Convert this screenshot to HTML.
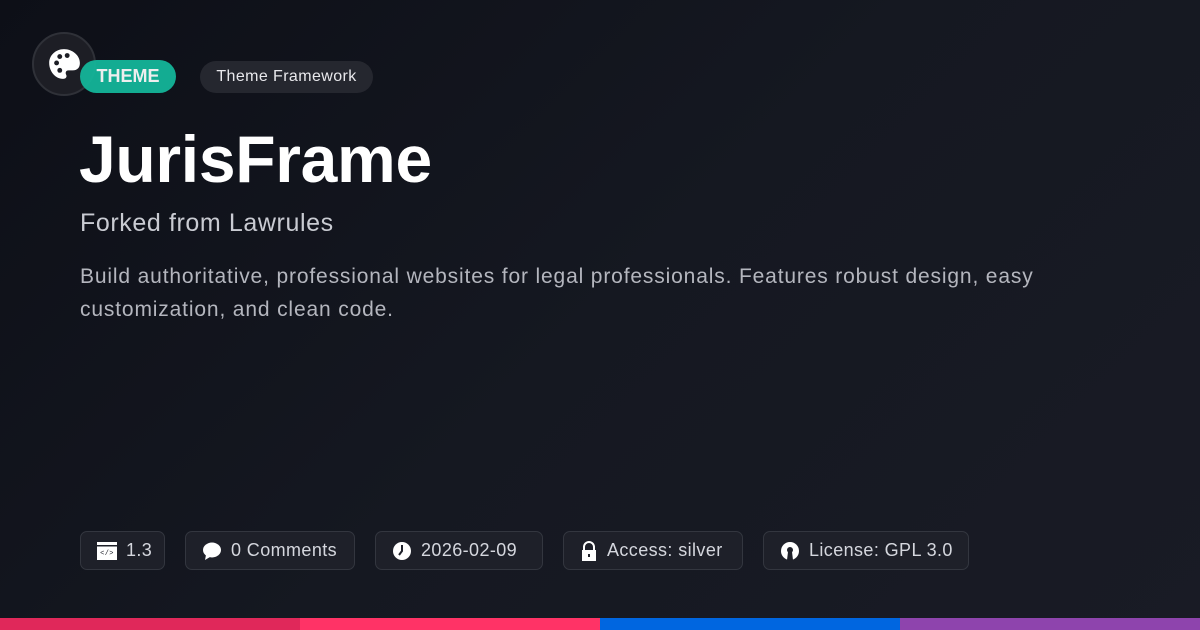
<!DOCTYPE html>
<html><head><meta charset="utf-8"><style>
*{margin:0;padding:0;box-sizing:border-box}
body{width:1200px;height:630px;overflow:hidden;background:linear-gradient(135deg,#0d0f17 0%,#151821 50%,#191b25 100%);font-family:"Liberation Sans",sans-serif;position:relative;color:#fff}
.logo{position:absolute;left:32px;top:32px;width:64px;height:64px;border-radius:50%;background:#1d1e25;border:2px solid #2f3138;display:flex;align-items:center;justify-content:center}
.theme{position:absolute;left:80px;top:60px;width:96px;height:33px;border-radius:17px;background:#14b89c;font-weight:bold;font-size:18px;line-height:33px;text-align:center;opacity:.93}
.fw{position:absolute;left:200px;top:61px;width:173px;height:32px;border-radius:16px;background:#25272f;font-size:16px;letter-spacing:.4px;line-height:32px;text-align:center;color:#e8e8ec}
h1{position:absolute;left:79px;top:121px;font-size:66px;font-weight:bold;letter-spacing:-0.3px;line-height:76px}
.sub{position:absolute;left:80px;top:209px;font-size:25px;letter-spacing:.6px;color:#c9cbd2}
.desc{position:absolute;left:80px;top:260px;width:1000px;font-size:21px;letter-spacing:.85px;line-height:33px;color:#b4b6be}
.chip{position:absolute;top:531px;height:39px;border-radius:7px;background:#1e2029;border:1px solid #33363f;font-size:18px;letter-spacing:.4px;line-height:37px;color:#d5d7de;display:flex;align-items:center;gap:9px;padding-left:16px}
.bar{position:absolute;top:618px;height:12px;width:300px}
</style></head><body>
<div class="logo"><svg width="36" height="36" viewBox="0 0 34 34"><path d="M17 3C9 3 3 9 3 16c0 8 6 15 13 15 3 0 4-2 3-4-1-2 0-4 2-4h4c5 0 7-3 7-7C32 9 25 3 17 3z" fill="#fff"/><circle cx="10" cy="16" r="2.3" fill="#1d1e25"/><circle cx="13" cy="10" r="2.3" fill="#1d1e25"/><circle cx="20" cy="9" r="2.3" fill="#1d1e25"/><circle cx="13" cy="23" r="2.3" fill="#1d1e25"/></svg></div>
<div class="theme">THEME</div>
<div class="fw">Theme Framework</div>
<h1>JurisFrame</h1>
<div class="sub">Forked from Lawrules</div>
<div class="desc">Build authoritative, professional websites for legal professionals. Features robust design, easy customization, and clean code.</div>
<div class="chip" style="left:80px;width:85px"><svg width="20" height="18" viewBox="0 0 20 18"><rect x="0" y="0" width="20" height="18" fill="#fff"/><rect x="0" y="3" width="20" height="1.5" fill="#1e2029"/><text x="10" y="13" font-size="7" text-anchor="middle" fill="#1e2029" font-family="Liberation Mono">&lt;/&gt;</text></svg>1.3</div>
<div class="chip" style="left:185px;width:170px"><svg width="20" height="20" viewBox="0 0 20 20"><ellipse cx="10" cy="9" rx="9" ry="7.5" fill="#fff"/><path d="M4 14l-1 5 5-3z" fill="#fff"/></svg>0 Comments</div>
<div class="chip" style="left:375px;width:168px"><svg width="20" height="20" viewBox="0 0 20 20"><circle cx="10" cy="10" r="9" fill="#fff"/><path d="M10 4v6l-3 4" stroke="#1e2029" stroke-width="2" fill="none"/></svg>2026-02-09</div>
<div class="chip" style="left:563px;width:180px"><svg width="18" height="20" viewBox="0 0 18 20"><path d="M4 9V6a5 5 0 0110 0v3" stroke="#fff" stroke-width="2" fill="none"/><rect x="2" y="9" width="14" height="11" fill="#fff"/><rect x="8" y="13" width="2" height="3" fill="#1e2029"/></svg>Access: silver</div>
<div class="chip" style="left:763px;width:206px"><svg width="20" height="20" viewBox="0 0 20 20"><circle cx="10" cy="10" r="9" fill="#fff"/><circle cx="10" cy="9" r="3" fill="#1e2029"/><path d="M8 11l-1 8h6l-1-8z" fill="#1e2029"/></svg>License: GPL 3.0</div>
<div class="bar" style="left:0;background:#e0285a"></div>
<div class="bar" style="left:300px;background:#ff3366"></div>
<div class="bar" style="left:600px;background:#0066e0"></div>
<div class="bar" style="left:900px;background:#8e44ad"></div>
</body></html>
